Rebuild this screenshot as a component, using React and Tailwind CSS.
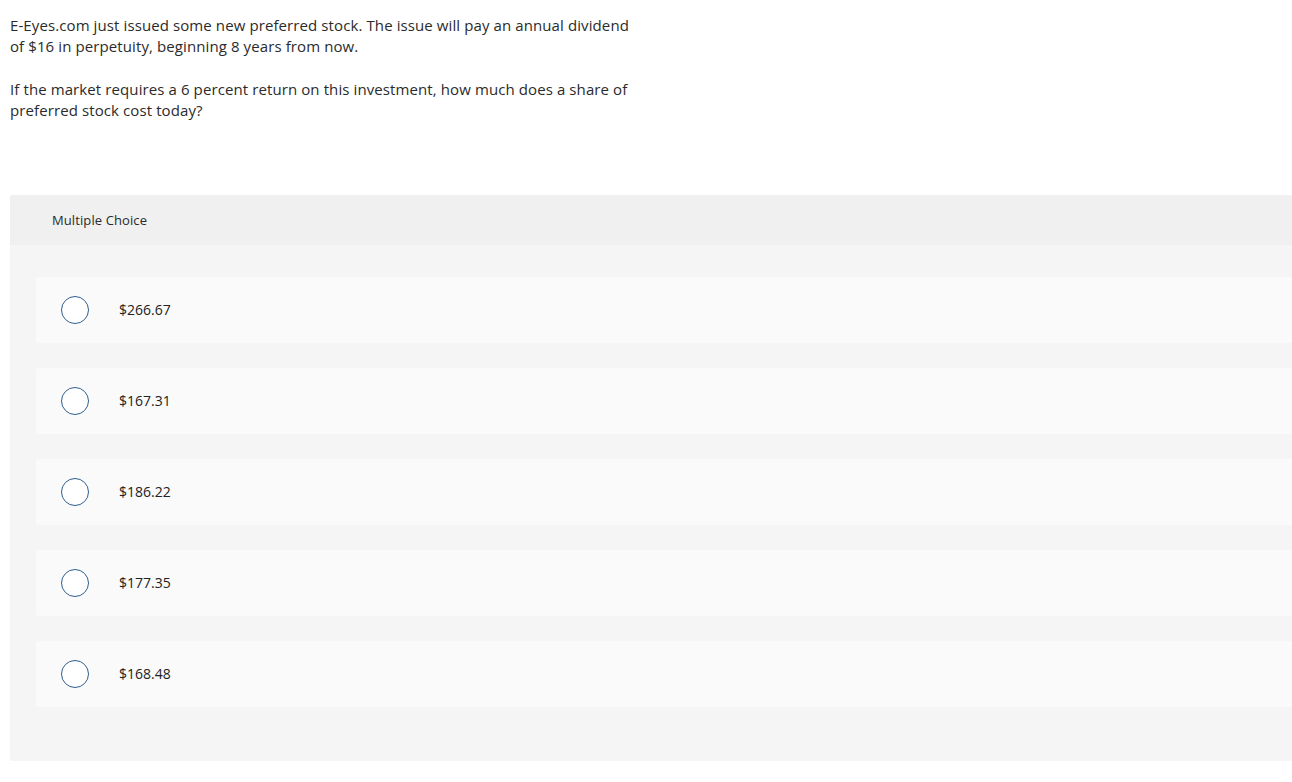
import React from "react";

const options = ["$266.67", "$167.31", "$186.22", "$177.35", "$168.48"];

const App = () => {
    return (
        <div className="bg-white min-h-[782px] font-['Open_Sans','Lato',sans-serif] text-[#2b2b2b]">
            <div className="pl-[10px] pt-[15px] w-[638px] text-[15px] leading-[21px] tracking-[0.1px]">
                <p>E-Eyes.com just issued some new preferred stock. The issue will pay an annual dividend of $16 in perpetuity, beginning 8 years from now.</p>
                <p className="mt-[22px]">If the market requires a 6 percent return on this investment, how much does a share of preferred stock cost today?</p>
            </div>
            <div className="ml-[10px] mt-[74px] bg-[#f5f5f5] rounded-[2px] h-[566px]">
                <div className="bg-[#f0f0f0] h-[50px] flex items-center pl-[42px] pt-[2px] text-[13px] tracking-[0.1px] text-[#2a2a2a] rounded-t-[2px]">
                    Multiple Choice
                </div>
                <div className="pl-[26px] pt-[32px] flex flex-col gap-[25px]">
                    {options.map((opt) => (
                        <div key={opt} className="h-[66px] bg-[#fafafa] rounded-l-[3px] flex items-center">
                            <div className="ml-[25px] w-[28px] h-[28px] rounded-full border-[1.5px] border-[#2f5f8e] bg-white" />
                            <span className="ml-[30px] pb-[2px] text-[14px] text-[#222]">{opt}</span>
                        </div>
                    ))}
                </div>
            </div>
        </div>
    );
};

export default App;
